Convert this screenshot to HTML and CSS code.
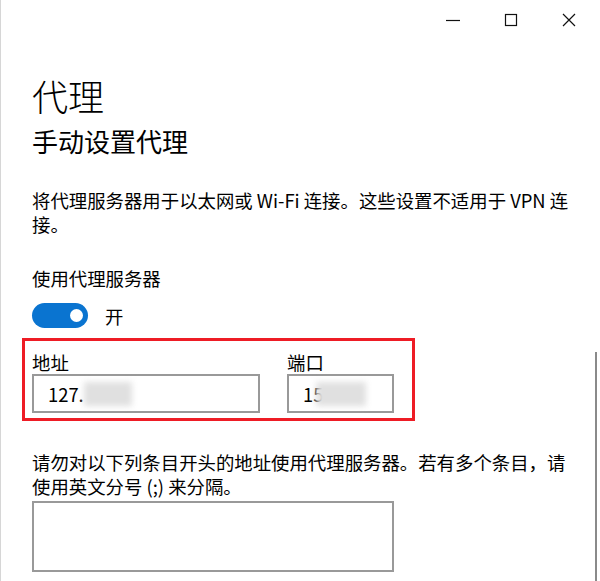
FILE: index.html
```html
<!DOCTYPE html>
<html lang="zh-CN">
<head>
    <meta charset="UTF-8">
    <meta name="viewport" content="width=device-width, initial-scale=1.0">
    <title>代理</title>
    <link rel="stylesheet" href="styles.css">
</head>
<body>
    <div class="window">
        <div class="titlebar">
            <button class="caption-btn" title="最小化">
                <svg width="16" height="16" viewBox="0 0 16 16"><path d="M1 8.5h14" stroke="#111" stroke-width="1.2" fill="none"/></svg>
            </button>
            <button class="caption-btn" title="最大化">
                <svg width="16" height="16" viewBox="0 0 16 16"><rect x="2.5" y="2.5" width="11" height="11" stroke="#111" stroke-width="1.2" fill="none"/></svg>
            </button>
            <button class="caption-btn" title="关闭">
                <svg width="16" height="16" viewBox="0 0 16 16"><path d="M2 2l12 12M14 2L2 14" stroke="#111" stroke-width="1.2" fill="none"/></svg>
            </button>
        </div>

        <div class="content">
            <h1 class="page-title">代理</h1>
            <h2 class="section-title">手动设置代理</h2>

            <p class="desc">将代理服务器用于以太网或 Wi-Fi 连接。这些设置不适用于 VPN 连接。</p>

            <div class="setting-label">使用代理服务器</div>
            <div class="toggle-row">
                <span class="toggle on"><span class="thumb"></span></span>
                <span class="toggle-text">开</span>
            </div>

            <div class="highlight">
                <div class="field">
                    <label class="field-label">地址</label>
                    <div class="text-box address">127.<span class="redact"></span></div>
                </div>
                <div class="field">
                    <label class="field-label">端口</label>
                    <div class="text-box port">15<span class="redact redact-port"></span></div>
                </div>
            </div>

            <p class="desc exceptions">请勿对以下列条目开头的地址使用代理服务器。若有多个条目，请使用英文分号 (;) 来分隔。</p>
            <div class="text-area"></div>
        </div>

        <!-- scrollbar thumb on the right edge -->
        <div class="scroll-thumb"></div>
    </div>
</body>
</html>
```

FILE: styles.css
```css
html, body {
    margin: 0;
    padding: 0;
    background: #fff;
}
body {
    font-family: "Noto Sans CJK SC", "Noto Sans", sans-serif;
    color: #000;
    overflow: hidden;
}
.window {
    position: relative;
    width: 600px;
    height: 581px;
    box-sizing: border-box;
    border-left: 1px solid #d6d6d6;
    overflow: hidden;
}
.titlebar {
    display: flex;
    justify-content: flex-end;
    height: 44px;
    padding-right: 2px;
}
.caption-btn {
    width: 58px;
    height: 44px;
    border: none;
    background: none;
    padding: 0;
    display: flex;
    align-items: center;
    justify-content: center;
    margin-top: -2px;
}
.content {
    padding-left: 31px;
    width: 544px;
}
.page-title {
    margin: 30px 0 0;
    font-size: 36px;
    line-height: 43px;
    font-weight: 300;
}
.section-title {
    margin: 7px 0 0;
    font-size: 26px;
    line-height: 34px;
    font-weight: 400;
}
.desc {
    margin: 30px 0 0;
    font-size: 18.4px;
    line-height: 24px;
}
.setting-label {
    margin-top: 30px;
    font-size: 18.4px;
    line-height: 24px;
}
.toggle-row {
    display: flex;
    align-items: center;
    margin-top: 13px;
    height: 25px;
}
.toggle {
    display: flex;
    align-items: center;
    justify-content: flex-end;
    width: 56px;
    height: 25px;
    box-sizing: border-box;
    padding-right: 5px;
    border-radius: 13px;
    background: #0a74d0;
}
.thumb {
    width: 13px;
    height: 13px;
    border-radius: 50%;
    background: #fff;
}
.toggle-text {
    margin-left: 17px;
    font-size: 18.4px;
    line-height: 24px;
}
.highlight {
    display: flex;
    gap: 27px;
    margin: 10px 0 0 -10px;
    width: 393px;
    box-sizing: border-box;
    padding: 9px 0 5px 7px;
    border: 3px solid #ee1c25;
}
.field {
    display: flex;
    flex-direction: column;
}
.field-label {
    font-size: 18.4px;
    line-height: 24px;
}
.text-box {
    display: flex;
    align-items: center;
    height: 39px;
    box-sizing: border-box;
    border: 2px solid #999;
    padding-left: 14px;
    font-size: 18.4px;
}
.text-box.address {
    width: 228px;
}
.text-box.port {
    width: 107px;
}
.redact {
    display: inline-block;
    width: 48px;
    height: 24px;
    background: #e0e0e0;
    filter: blur(3px);
}
.redact-port {
    margin-left: -7px;
    width: 50px;
}
.desc.exceptions {
    margin-top: 29px;
}
.text-area {
    margin-top: 3px;
    width: 362px;
    height: 71px;
    box-sizing: border-box;
    border: 2px solid #999;
}
.scroll-thumb {
    position: absolute;
    left: 594px;
    top: 352px;
    width: 2px;
    height: 240px;
    background: #8a8a8a;
}
```
